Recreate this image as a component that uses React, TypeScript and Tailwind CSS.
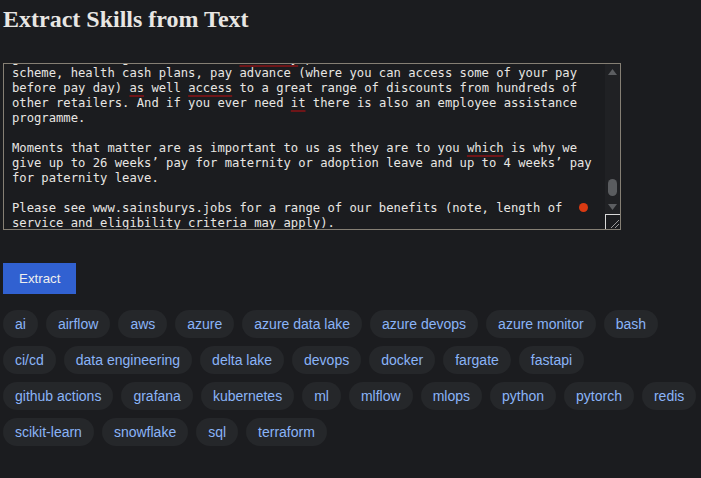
import type { ReactNode } from "react";

const skills = [
  "ai",
  "airflow",
  "aws",
  "azure",
  "azure data lake",
  "azure devops",
  "azure monitor",
  "bash",
  "ci/cd",
  "data engineering",
  "delta lake",
  "devops",
  "docker",
  "fargate",
  "fastapi",
  "github actions",
  "grafana",
  "kubernetes",
  "ml",
  "mlflow",
  "mlops",
  "python",
  "pytorch",
  "redis",
  "scikit-learn",
  "snowflake",
  "sql",
  "terraform",
];

function Typo({ children }: { children: ReactNode }) {
  return (
    <span className="underline decoration-[#6e1518] decoration-2 underline-offset-[3px]">{children}</span>
  );
}

function Line({ children }: { children?: ReactNode }) {
  return <div className="h-[15px] whitespace-pre">{children ?? " "}</div>;
}

function Scrollbar() {
  return (
    <div className="flex w-[15px] flex-col bg-[#202124]">
      <div className="flex h-[15px] items-center justify-center">
        <svg width="9" height="6" viewBox="0 0 9 6">
          <path d="M4.5 0 L9 6 L0 6 Z" fill="#5c5e61" />
        </svg>
      </div>
      <div className="flex flex-1 justify-center">
        <div className="mt-[100px] h-[17px] w-[9px] rounded-full bg-[#5a5c5f]" />
      </div>
      <div className="flex h-[15px] items-center justify-center">
        <svg width="9" height="6" viewBox="0 0 9 6">
          <path d="M0 0 L9 0 L4.5 6 Z" fill="#5c5e61" />
        </svg>
      </div>
      <div className="h-[15px] border-l border-t border-[#d8d8d8] bg-[#1b1c1f]">
        <svg width="14" height="14" viewBox="0 0 14 14">
          <path d="M5 13 L13 5 M9 13 L13 9" stroke="#9a9a9a" strokeWidth="1" />
        </svg>
      </div>
    </div>
  );
}

export default function App() {
  return (
    <div className="min-h-screen bg-[#1b1c1f] px-[3px] pt-[5px] font-['Liberation_Sans',Arial,sans-serif]">
      <h1 className="font-['Liberation_Serif','Times_New_Roman',serif] text-[24px] leading-[28px] font-bold text-[#e8e6e3]">
        Extract Skills from Text
      </h1>

      <div className="mt-[30px] flex h-[167px] w-[618px] border border-[#857f74] bg-[#1b1c1f]">
        <div className="relative flex-1 overflow-hidden pl-[8px] font-['DejaVu_Sans_Mono',monospace] text-[12.2px] leading-[15px] text-[#e8e6e3]">
          <div className="-mt-[13px]">
            <Line>
              generous colleague discount, a <Typo>Sainsbry</Typo> pension, a share save
            </Line>
            <Line>scheme, health cash plans, pay advance (where you can access some of your pay</Line>
            <Line>
              before pay day) <Typo>as</Typo> well <Typo>access</Typo> to a great range of discounts from hundreds of
            </Line>
            <Line>
              other retailers. And if you ever need <Typo>it</Typo> there is also an employee assistance
            </Line>
            <Line>programme.</Line>
            <Line />
            <Line>
              Moments that matter are as important to us as they are to you <Typo>which</Typo> is why we
            </Line>
            <Line>give up to 26 weeks’ pay for maternity or adoption leave and up to 4 weeks’ pay</Line>
            <Line>for paternity leave.</Line>
            <Line />
            <Line>Please see www.sainsburys.jobs for a range of our benefits (note, length of</Line>
            <Line>service and eligibility criteria may apply).</Line>
          </div>
          <span className="absolute left-[575px] top-[139px] size-[9px] rounded-full bg-[#d93a12]" />
        </div>
        <Scrollbar />
      </div>

      <button className="mt-[33px] h-[31px] bg-[#3161d1] px-4 text-[13.33px] text-[#eeeeee]">Extract</button>

      <div className="mt-4 flex flex-wrap gap-2">
        {skills.map((skill) => (
          <span
            key={skill}
            className="rounded-full bg-[#25272a] px-3 py-[6px] text-[14px] leading-4 text-[#8ab4f8]"
          >
            {skill}
          </span>
        ))}
      </div>
    </div>
  );
}
